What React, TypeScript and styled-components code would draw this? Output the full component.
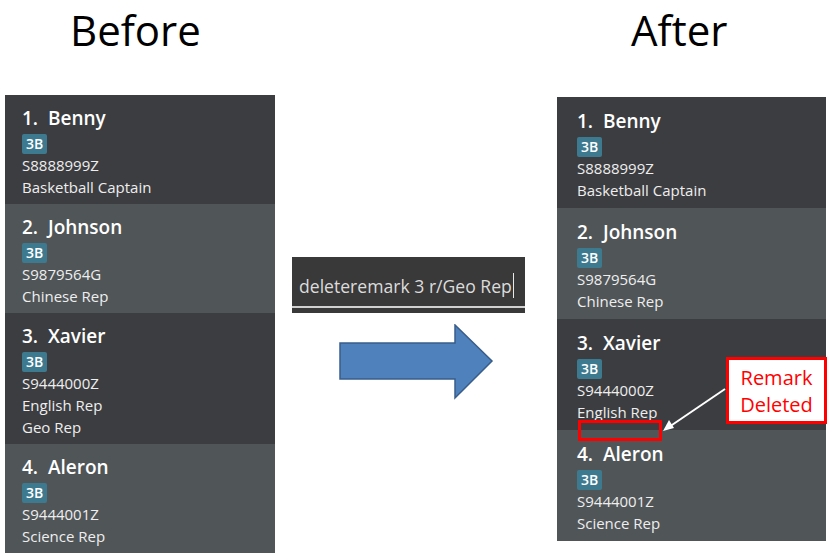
import React from "react";
import styled, { createGlobalStyle } from "styled-components";

const Global = createGlobalStyle`
  html, body { margin: 0; padding: 0; background: #ffffff; }
  body { width: 829px; height: 553px; overflow: hidden; font-family: "Open Sans", "Noto Sans", sans-serif; }
`;

const Page = styled.div`
  display: flex;
  align-items: flex-start;
  width: 829px;
  height: 553px;
  overflow: hidden;
`;

const Column = styled.div<{ $width: number; $ml?: number }>`
  display: flex;
  flex-direction: column;
  width: ${(p) => p.$width}px;
  margin-left: ${(p) => p.$ml ?? 0}px;
  flex-shrink: 0;
`;

const Title = styled.div<{ $indent: number; $height: number }>`
  height: ${(p) => p.$height}px;
  padding-left: ${(p) => p.$indent}px;
  box-sizing: border-box;
  font-family: "Open Sans", sans-serif;
  font-size: 42px;
  line-height: 1;
  padding-top: 9px;
  color: #000;
`;

const Panel = styled.div`
  position: relative;
  display: flex;
  flex-direction: column;
`;

const Card = styled.div<{ $alt: boolean; $wide: boolean }>`
  display: flex;
  flex-direction: column;
  align-items: flex-start;
  background: ${(p) => (p.$alt ? "#505558" : "#3c3d40")};
  padding: ${(p) => (p.$wide ? "9px 0 7px 20px" : "8px 0 6px 17px")};
  color: #f2f2f2;
`;

const Name = styled.div`
  font-size: 19px;
  font-weight: 600;
  line-height: 30px;
  white-space: pre;
  color: #ffffff;
`;

const Badge = styled.span`
  margin-top: 1px;
  height: 20px;
  padding: 0 4px;
  border-radius: 2px;
  background: #3d7a8f;
  color: #ffffff;
  font-size: 14px;
  font-weight: 600;
  line-height: 20px;
`;

const Line = styled.div`
  font-size: 15px;
  line-height: 22px;
  color: #eeeeee;
`;

const Middle = styled.div`
  display: flex;
  flex-direction: column;
  width: 282px;
  flex-shrink: 0;
  padding-top: 257px;
`;

const CommandBox = styled.div`
  margin-left: 17px;
  width: 233px;
  height: 56px;
  box-sizing: border-box;
  background: #393939;
  display: flex;
  flex-direction: column;
`;

const CommandText = styled.div`
  height: 49px;
  box-sizing: border-box;
  padding-top: 8px;
  display: flex;
  align-items: center;
  padding-left: 7px;
  font-size: 17.6px;
  color: #dcdcdc;
  white-space: pre;
`;

const Caret = styled.span`
  display: inline-block;
  width: 1px;
  height: 25px;
  background: #e8e8e8;
  margin-left: 1px;
`;

const CommandRule = styled.div`
  height: 2px;
  background: #d0d0d0;
`;

const ArrowWrap = styled.div`
  margin-top: 11px;
  margin-left: 62px;
  width: 160px;
  height: 82px;
`;

const Callout = styled.div`
  position: absolute;
  left: 169px;
  top: 260px;
  width: 101px;
  height: 67px;
  box-sizing: border-box;
  border: 3px solid #ff0000;
  background: #ffffff;
  display: flex;
  flex-direction: column;
  align-items: center;
  justify-content: center;
  font-size: 20px;
  line-height: 27px;
  color: #ff0000;
`;

const Highlight = styled.div`
  position: absolute;
  left: 21px;
  top: 323px;
  width: 84px;
  height: 21px;
  box-sizing: border-box;
  border: 3px solid #ff0000;
`;

const Pointer = styled.svg`
  position: absolute;
  left: 100px;
  top: 285px;
  overflow: visible;
`;

type Person = { name: string; id: string; remarks: string[] };

const before: Person[] = [
  { name: "Benny", id: "S8888999Z", remarks: ["Basketball Captain"] },
  { name: "Johnson", id: "S9879564G", remarks: ["Chinese Rep"] },
  { name: "Xavier", id: "S9444000Z", remarks: ["English Rep", "Geo Rep"] },
  { name: "Aleron", id: "S9444001Z", remarks: ["Science Rep"] },
];

const after: Person[] = [
  { name: "Benny", id: "S8888999Z", remarks: ["Basketball Captain"] },
  { name: "Johnson", id: "S9879564G", remarks: ["Chinese Rep"] },
  { name: "Xavier", id: "S9444000Z", remarks: ["English Rep"] },
  { name: "Aleron", id: "S9444001Z", remarks: ["Science Rep"] },
];

const PersonCard = ({ p, i, wide }: { p: Person; i: number; wide: boolean }) => (
  <Card $alt={i % 2 === 1} $wide={wide}>
    <Name>{`${i + 1}.  ${p.name}`}</Name>
    <Badge>3B</Badge>
    <Line>{p.id}</Line>
    {p.remarks.map((r) => (
      <Line key={r}>{r}</Line>
    ))}
  </Card>
);

export default function App() {
  return (
    <Page>
      <Global />
      <Column $width={270} $ml={5}>
        <Title $indent={65} $height={95}>Before</Title>
        <Panel>
          {before.map((p, i) => (
            <PersonCard key={p.name} p={p} i={i} wide={false} />
          ))}
        </Panel>
      </Column>
      <Middle>
        <CommandBox>
          <CommandText>
            deleteremark 3 r/Geo Rep<Caret />
          </CommandText>
          <CommandRule />
        </CommandBox>
        <ArrowWrap>
          <svg width="160" height="82" viewBox="0 0 160 82">
            <polygon
              points="3,19 118,19 118,1 155,37 118,74 118,55 3,55"
              fill="#4f81bd"
              stroke="#385d8a"
              strokeWidth="1.5"
            />
          </svg>
        </ArrowWrap>
      </Middle>
      <Column $width={269}>
        <Title $indent={74} $height={97}>After</Title>
        <Panel>
          {after.map((p, i) => (
            <PersonCard key={p.name} p={p} i={i} wide />
          ))}
          <Highlight />
          <Pointer width="70" height="52">
            <line x1="68" y1="7" x2="12" y2="45" stroke="#ffffff" strokeWidth="2" />
            <polygon points="6,49 12,38 17,46" fill="#ffffff" />
          </Pointer>
          <Callout>
            <span>Remark</span>
            <span>Deleted</span>
          </Callout>
        </Panel>
      </Column>
    </Page>
  );
}
